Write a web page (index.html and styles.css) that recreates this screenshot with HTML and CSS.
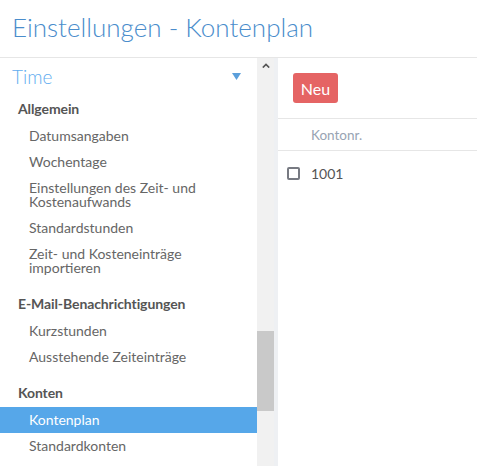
FILE: index.html
```html
<!DOCTYPE html>
<html lang="de">
<head>
<meta charset="utf-8">
<title>Einstellungen - Kontenplan</title>
<link rel="stylesheet" href="styles.css">
</head>
<body>
<header class="page-header">
  <h1 class="page-title">Einstellungen - Kontenplan</h1>
</header>
<main class="layout">
  <nav class="sidebar">
    <div class="app-row">
      <span class="app-name">Time</span>
      <svg class="app-caret" width="9" height="7" viewBox="0 0 9 7"><path d="M0 0H9L4.5 7Z" fill="#5b9fdb"/></svg>
    </div>
    <section class="group first">
      <div class="group-title">Allgemein</div>
      <ul class="items">
        <li class="item">Datumsangaben</li>
        <li class="item">Wochentage</li>
        <li class="item">Einstellungen des Zeit- und Kostenaufwands</li>
        <li class="item">Standardstunden</li>
        <li class="item">Zeit- und Kosteneinträge importieren</li>
      </ul>
    </section>
    <section class="group">
      <div class="group-title">E-Mail-Benachrichtigungen</div>
      <ul class="items">
        <li class="item">Kurzstunden</li>
        <li class="item">Ausstehende Zeiteinträge</li>
      </ul>
    </section>
    <section class="group">
      <div class="group-title">Konten</div>
      <ul class="items">
        <li class="item active">Kontenplan</li>
        <li class="item">Standardkonten</li>
      </ul>
    </section>
  </nav>
  <div class="scrollbar">
    <div class="scroll-up">
      <svg width="8" height="5" viewBox="0 0 8 5"><path d="M0.8 4.6L4 1.4L7.2 4.6" fill="none" stroke="#555" stroke-width="1.6"/></svg>
    </div>
    <div class="scroll-track">
      <div class="scroll-thumb"></div>
    </div>
  </div>
  <div class="divider"></div>
  <section class="content">
    <div class="toolbar">
      <button class="btn-new" type="button">Neu</button>
    </div>
    <div class="table">
      <div class="table-head">
        <span class="cell-check"></span>
        <span class="col-title">Kontonr.</span>
      </div>
      <div class="table-row">
        <span class="cell-check"><span class="checkbox"></span></span>
        <span class="cell-text">1001</span>
      </div>
    </div>
  </section>
</main>
</body>
</html>
```

FILE: styles.css
```css
* { box-sizing: border-box; }
html, body { margin: 0; padding: 0; }
body {
  font-family: Lato, "Open Sans", "Liberation Sans", sans-serif;
  background: #fff;
  color: #555;
  width: 477px;
  height: 466px;
  overflow: hidden;
}
.page-header {
  height: 58px;
  border-bottom: 1px solid #e6e6e6;
  padding: 12px 0 0 12px;
}
.page-title {
  margin: 0;
  font-size: 26px;
  font-weight: 300;
  line-height: 30px;
  color: #4a8dcc;
}
.layout {
  display: flex;
  height: 408px;
}
.sidebar {
  width: 257px;
  flex: none;
  overflow: hidden;
}
.app-row {
  display: flex;
  align-items: center;
  justify-content: space-between;
  height: 41px;
  padding: 0 16px 4px 12px;
}
.app-name {
  font-size: 19px;
  font-weight: 300;
  color: #62adef;
}
.app-caret { display: block; }
.group { margin-top: 13px; }
.group.first { margin-top: 0; }
.group-title {
  font-size: 14px;
  font-weight: 700;
  line-height: 20px;
  padding-left: 18px;
  margin-bottom: 4px;
  color: #555;
  letter-spacing: -0.1px;
}
.items { list-style: none; margin: 0; padding: 0; }
.item {
  font-size: 14px;
  line-height: 14px;
  padding: 6px 20px 6px 29px;
  color: #666;
}
.item.active {
  background: #56a7e9;
  color: #fff;
}
.scrollbar {
  width: 17px;
  flex: none;
  background: #f1f1f1;
  display: flex;
  flex-direction: column;
}
.scroll-up {
  height: 17px;
  display: flex;
  justify-content: center;
  padding-top: 5px;
}
.scroll-up svg { display: block; }
.scroll-track {
  flex: 1;
  padding-top: 256px;
}
.scroll-thumb {
  height: 80px;
  background: #c9c9c9;
}
.divider {
  width: 4px;
  flex: none;
  background: #eef0f3;
}
.content {
  flex: 1;
}
.toolbar {
  padding: 15px;
}
.btn-new {
  font-family: inherit;
  font-size: 16px;
  color: #fff;
  background: #e56464;
  border: none;
  border-radius: 3px;
  height: 30px;
  width: 45px;
  padding: 0;
}
.table-head, .table-row {
  display: flex;
  align-items: center;
}
.table-head {
  height: 33px;
  border-top: 1px solid #e6e6e6;
  border-bottom: 1px solid #e6e6e6;
}
.cell-check {
  width: 33px;
  padding-left: 9px;
  display: flex;
}
.col-title {
  font-size: 13.5px;
  color: #98a4b3;
}
.table-row {
  height: 44px;
}
.checkbox {
  width: 13px;
  height: 13px;
  border: 2px solid #777a82;
  border-radius: 2px;
}
.cell-text {
  font-size: 14px;
  color: #555;
}
```
